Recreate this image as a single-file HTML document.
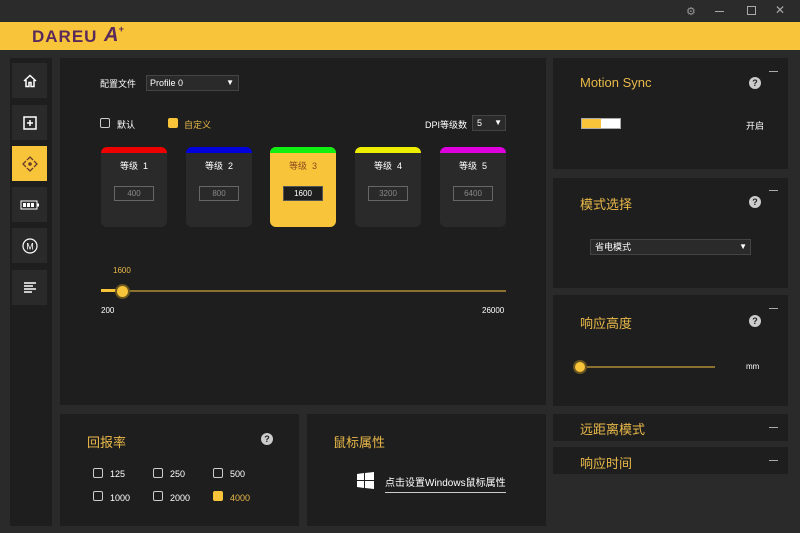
<!DOCTYPE html>
<html><head><meta charset="utf-8">
<style>
*{margin:0;padding:0;box-sizing:border-box}
body{width:800px;height:533px;background:#2a2a2a;font-family:"Liberation Sans","Noto Sans CJK SC",sans-serif;color:#fff;position:relative;overflow:hidden;font-size:9px}
.abs{position:absolute}
.panel{position:absolute;background:#1e1e1e}
.sb{position:absolute;left:12px;width:35px;height:35px;background:#2a2a2a;display:flex;align-items:center;justify-content:center}
.gold{color:#e9b949}
.card{position:absolute;top:147px;width:66px;height:80px;background:#2a2a2a;border-radius:6px;overflow:hidden}
.card .bar{height:6px}
.card .t{text-align:center;font-size:9px;margin-top:6px}
.card .in{position:absolute;left:13px;top:39px;width:40px;height:15px;border:1px solid #666;color:#888;text-align:center;line-height:13px;font-size:8px}
.cb{position:absolute;width:10px;height:10px;border:1px solid #ccc;border-radius:2px}
.q{position:absolute;width:12px;height:12px;border-radius:50%;background:#ccc;color:#1e1e1e;font-weight:bold;font-size:9px;text-align:center;line-height:12px}
.min{position:absolute;left:769px;width:9px;height:1px;background:#aaa}
.h{position:absolute;font-size:13px;color:#e9b949}
</style></head><body>
<div class="abs" style="left:0;top:0;width:800px;height:22px;background:#2b2b2b"></div>
<div class="abs" style="left:686px;top:5px;color:#999;font-size:11px">⚙</div>
<div class="abs" style="left:715px;top:11px;width:9px;height:1px;background:#aaa"></div>
<div class="abs" style="left:747px;top:6px;width:9px;height:9px;border:1px solid #aaa"></div>
<div class="abs" style="left:775px;top:3px;color:#aaa;font-size:12px">✕</div>
<div class="abs" style="left:0;top:22px;width:800px;height:28px;background:#f8c53a"></div>
<div class="abs" style="left:32px;top:27px;font-size:17px;font-weight:bold;color:#5a2a5a;letter-spacing:1px">DAREU</div>
<div class="abs" style="left:104px;top:24px;font-size:20px;font-weight:bold;color:#5a2a5a;font-style:italic">A<span style="font-size:9px;vertical-align:top">+</span></div>

<div class="panel" style="left:10px;top:58px;width:42px;height:468px"></div>
<div class="sb" style="top:63px"><svg width="14" height="14" viewBox="0 0 14 14"><path d="M1 7L7 1.5L13 7M3 6v6.5h3v-4h2v4h3V6" fill="none" stroke="#fff" stroke-width="1.5"/></svg></div>
<div class="sb" style="top:105px"><svg width="14" height="14"><rect x="1" y="1" width="12" height="12" fill="none" stroke="#fff" stroke-width="1.5"/><path d="M7 4v6M4 7h6" stroke="#fff" stroke-width="1.5"/></svg></div>
<div class="sb" style="top:146px;background:#f8c53a"><svg width="16" height="16"><path d="M5 4L8 1L11 4M5 12L8 15L11 12M4 5L1 8L4 11M12 5L15 8L12 11" fill="none" stroke="#6a3a2a" stroke-width="1.3"/><circle cx="8" cy="8" r="1.8" fill="#6a3a2a"/></svg></div>
<div class="sb" style="top:187px"><svg width="20" height="10"><rect x="1" y="1" width="16" height="8" fill="none" stroke="#fff"/><rect x="3" y="3" width="3" height="4" fill="#fff"/><rect x="7" y="3" width="3" height="4" fill="#fff"/><rect x="11" y="3" width="3" height="4" fill="#fff"/><rect x="17" y="3.5" width="2" height="3" fill="#fff"/></svg></div>
<div class="sb" style="top:228px"><svg width="16" height="16"><circle cx="8" cy="8" r="7" fill="none" stroke="#fff" stroke-width="1.2"/><text x="8" y="11.5" font-size="9" fill="#fff" text-anchor="middle" font-family="Liberation Sans">M</text></svg></div>
<div class="sb" style="top:270px"><svg width="14" height="14"><path d="M1 2h12M1 5h9M1 8h12M1 11h8" stroke="#fff" stroke-width="1.6"/></svg></div>

<div class="panel" style="left:60px;top:58px;width:486px;height:347px"></div>
<div class="abs" style="left:100px;top:77px">配置文件</div>
<div class="abs" style="left:146px;top:75px;width:93px;height:16px;background:#2a2a2a;border:1px solid #444;padding-left:3px;line-height:14px">Profile 0<span style="position:absolute;right:4px;font-size:8px">▼</span></div>
<div class="cb" style="left:100px;top:118px"></div><div class="abs" style="left:117px;top:118px">默认</div>
<div class="cb" style="left:168px;top:118px;background:#f8c53a;border-color:#f8c53a"></div><div class="abs gold" style="left:184px;top:118px">自定义</div>
<div class="abs" style="left:425px;top:118px">DPI等级数</div>
<div class="abs" style="left:472px;top:115px;width:34px;height:16px;background:#2a2a2a;border:1px solid #444;padding-left:4px;line-height:14px">5<span style="position:absolute;right:3px;font-size:8px">▼</span></div>

<div class="card" style="left:101px"><div class="bar" style="background:#e00"></div><div class="t">等级 &nbsp;1</div><div class="in">400</div></div>
<div class="card" style="left:186px"><div class="bar" style="background:#00d"></div><div class="t">等级 &nbsp;2</div><div class="in">800</div></div>
<div class="card" style="left:270px;background:#f8c53a"><div class="bar" style="background:#1e1"></div><div class="t" style="color:#8a4a20">等级 &nbsp;3</div><div class="in" style="background:#1e1e1e;color:#fff;border:1px solid #555">1600</div></div>
<div class="card" style="left:355px"><div class="bar" style="background:#ee0"></div><div class="t">等级 &nbsp;4</div><div class="in">3200</div></div>
<div class="card" style="left:440px"><div class="bar" style="background:#d0d"></div><div class="t">等级 &nbsp;5</div><div class="in">6400</div></div>

<div class="abs gold" style="left:113px;top:266px;font-size:8px">1600</div>
<div class="abs" style="left:101px;top:290px;width:405px;height:2px;background:#8a7130"></div>
<div class="abs" style="left:101px;top:289px;width:20px;height:3px;background:#f8c53a"></div>
<div class="abs" style="left:117px;top:286px;width:11px;height:11px;border-radius:50%;background:#f8c53a;box-shadow:0 0 0 2px #6a5520"></div>
<div class="abs" style="left:101px;top:306px;font-size:8px">200</div>
<div class="abs" style="left:482px;top:306px;font-size:8px">26000</div>

<div class="panel" style="left:60px;top:414px;width:239px;height:112px"></div>
<div class="h" style="left:87px;top:432px">回报率</div>
<div class="q" style="left:261px;top:433px">?</div>
<div class="cb" style="left:93px;top:468px"></div><div class="abs" style="left:110px;top:469px">125</div>
<div class="cb" style="left:153px;top:468px"></div><div class="abs" style="left:170px;top:469px">250</div>
<div class="cb" style="left:213px;top:468px"></div><div class="abs" style="left:230px;top:469px">500</div>
<div class="cb" style="left:93px;top:491px"></div><div class="abs" style="left:110px;top:493px">1000</div>
<div class="cb" style="left:153px;top:491px"></div><div class="abs" style="left:170px;top:493px">2000</div>
<div class="cb" style="left:213px;top:491px;background:#f8c53a;border-color:#f8c53a"></div><div class="abs gold" style="left:230px;top:493px">4000</div>

<div class="panel" style="left:307px;top:414px;width:239px;height:112px"></div>
<div class="h" style="left:333px;top:432px">鼠标属性</div>
<svg class="abs" style="left:357px;top:472px" width="17" height="17"><path d="M0 2l7-1v7H0zM8 1l9-1v8H8zM0 9h7v7l-7-1zM8 9h9v8l-9-1z" fill="#fff"/></svg>
<div class="abs" style="left:385px;top:474px;font-size:10px;border-bottom:1px solid #ccc;padding-bottom:3px">点击设置Windows鼠标属性</div>

<div class="panel" style="left:553px;top:58px;width:235px;height:111px"></div>
<div class="min" style="top:71px"></div>
<div class="h" style="left:580px;top:75px">Motion Sync</div>
<div class="q" style="left:749px;top:77px">?</div>
<div class="abs" style="left:581px;top:118px;width:40px;height:11px;background:#fff;border:1px solid #aaa"></div>
<div class="abs" style="left:582px;top:119px;width:19px;height:9px;background:#f8c53a"></div>
<div class="abs" style="left:746px;top:119px">开启</div>

<div class="panel" style="left:553px;top:178px;width:235px;height:110px"></div>
<div class="min" style="top:190px"></div>
<div class="h" style="left:580px;top:194px">模式选择</div>
<div class="q" style="left:749px;top:196px">?</div>
<div class="abs" style="left:590px;top:239px;width:161px;height:16px;background:#2a2a2a;border:1px solid #444;padding-left:4px;line-height:14px">省电模式<span style="position:absolute;right:3px;font-size:8px">▼</span></div>

<div class="panel" style="left:553px;top:295px;width:235px;height:111px"></div>
<div class="min" style="top:308px"></div>
<div class="h" style="left:580px;top:313px">响应高度</div>
<div class="q" style="left:749px;top:315px">?</div>
<div class="abs" style="left:580px;top:366px;width:135px;height:2px;background:#8a7130"></div>
<div class="abs" style="left:575px;top:362px;width:10px;height:10px;border-radius:50%;background:#f8c53a;box-shadow:0 0 0 2px #6a5520"></div>
<div class="abs" style="left:746px;top:362px;font-size:8px">mm</div>

<div class="panel" style="left:553px;top:414px;width:235px;height:27px"></div>
<div class="min" style="top:427px"></div>
<div class="h" style="left:580px;top:419px">远距离模式</div>
<div class="panel" style="left:553px;top:447px;width:235px;height:27px"></div>
<div class="min" style="top:460px"></div>
<div class="h" style="left:580px;top:453px">响应时间</div>
</body></html>
